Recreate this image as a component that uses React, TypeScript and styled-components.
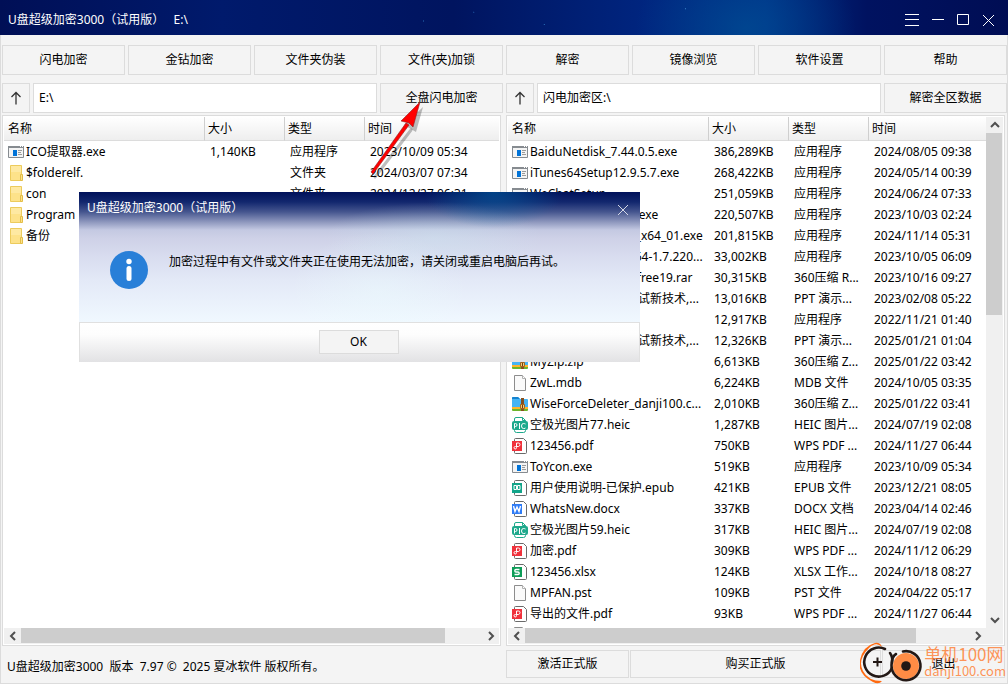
import React from "react";
import styled, { createGlobalStyle, css } from "styled-components";

const LINE = "#dcdcdc";

const GlobalStyle = createGlobalStyle`
  * { box-sizing: border-box; }
  body { margin: 0; background: #f4f4f4; }
  body, button, input, table {
    font-family: "Noto Sans", "Noto Sans CJK SC", sans-serif;
    font-size: 12px;
    line-height: 16px;
    color: #000;
  }
`;

/* ---------- window frame ---------- */

const Window = styled.div`
  position: relative;
  display: flex;
  flex-direction: column;
  height: 100vh;
  background: #f4f4f4;
  overflow: hidden;
`;

const TitleBar = styled.header`
  display: flex;
  align-items: center;
  justify-content: space-between;
  flex: none;
  height: 35px;
  padding: 4px 12px 0 8px;
  color: #fff;
  background:
    radial-gradient(circle at 11% 30%, #2456a8 0, transparent 1px),
    radial-gradient(circle at 42% 60%, #2a6fb8 0, transparent 1px),
    radial-gradient(circle at 47% 35%, #1f59a5 0, transparent 1px),
    radial-gradient(circle at 54% 70%, #2a6fb8 0, transparent 1px),
    radial-gradient(circle at 68% 25%, #3b86c8 0, transparent 1px),
    radial-gradient(ellipse 110px 80px at 74% 80%, rgba(0, 84, 150, 0.6), transparent),
    linear-gradient(90deg, #000f56 0%, #001a6c 22%, #00145f 45%, #00257f 64%, #003088 76%, #001260 86%, #000d54 100%);
`;

const TitleText = styled.h1`
  margin: 0;
  font-size: 12px;
  font-weight: 400;
  white-space: pre;
`;

const WindowControls = styled.div`
  display: flex;
  gap: 9px;
`;

const IconButton = styled.button`
  display: flex;
  align-items: center;
  justify-content: center;
  width: 16px;
  height: 16px;
  padding: 0;
  border: 0;
  background: none;
  color: #fff;
`;

const Body = styled.main`
  display: flex;
  flex: 1;
  flex-direction: column;
  min-height: 0;
  padding: 10px 0 5px 1px;
  border: 1px solid ${LINE};
  border-top: 0;
`;

/* ---------- controls ---------- */

const Button = styled.button`
  min-width: 0;
  padding: 0;
  border: 1px solid ${LINE};
  background: #f4f4f4;
  text-align: center;
  white-space: nowrap;
`;

const Toolbar = styled.nav`
  display: grid;
  grid-template-columns: repeat(8, minmax(0, 1fr));
  grid-auto-rows: 30px;
  gap: 3px;
`;

const Halves = styled.div<{ $fill?: boolean }>`
  display: grid;
  grid-template-columns: repeat(2, minmax(0, 1fr));
  gap: 3px;
  ${(p) => p.$fill && css`
    flex: 1;
    min-height: 0;
    margin-top: 2px;
  `}
`;

const PathRow = styled.div`
  display: grid;
  grid-template-columns: 28px minmax(0, 1fr) 123px;
  grid-auto-rows: 30px;
  gap: 3px;
  margin-top: 8px;
`;

const UpButton = styled(Button)`
  display: flex;
  align-items: center;
  justify-content: center;
`;

const PathInput = styled.input`
  min-width: 0;
  padding: 0 5px;
  border: 1px solid ${LINE};
  border-radius: 0;
  background: #fff;
`;

/* ---------- file list ---------- */

const Panel = styled.section`
  display: grid;
  grid-template-columns: minmax(0, 1fr) auto;
  grid-template-rows: minmax(0, 1fr) 16px;
  min-height: 0;
  margin-right: 2px;
  padding: 1px;
  border: 1px solid ${LINE};
  background: #fff;
`;

const ListArea = styled.div`
  min-height: 0;
  overflow: hidden;
`;

const FileTable = styled.table`
  width: 100%;
  table-layout: fixed;
  border-collapse: separate;
  border-spacing: 0;
`;

const Col = styled.col<{ $w?: number }>`
  ${(p) => p.$w && `width: ${p.$w}px;`}
`;

const HeadCell = styled.th`
  height: 24px;
  padding: 0 0 0 3px;
  border-right: 1px solid #cfcfcf;
  border-bottom: 1px solid ${LINE};
  background: linear-gradient(#fff, #eee);
  font-weight: 400;
  text-align: left;
  &:first-child { padding-left: 4px; }
  &:last-child { border-right: 0; }
`;

const Cell = styled.td`
  height: 21px;
  padding: 0 0 0 5px;
  overflow: hidden;
  white-space: nowrap;
`;

const NameCell = styled(Cell)`
  padding-left: 4px;
`;

const FileName = styled.span`
  display: flex;
  align-items: center;
  gap: 2px;
  svg { flex: none; }
`;

/* ---------- scroll bars ---------- */

const ScrollTrack = styled.div<{ $vertical?: boolean }>`
  display: flex;
  flex-direction: ${(p) => (p.$vertical ? "column" : "row")};
  min-width: 16px;
  background: #f0f0f0;
`;

const ScrollArrow = styled.button`
  display: flex;
  align-items: center;
  justify-content: center;
  flex: none;
  width: 17px;
  height: 16px;
  padding: 0;
  border: 0;
  background: none;
`;

const ScrollLane = styled.div<{ $vertical?: boolean }>`
  display: flex;
  flex: 1;
  flex-direction: ${(p) => (p.$vertical ? "column" : "row")};
  min-height: 0;
  padding: ${(p) => (p.$vertical ? "0 1px 0 0" : "0 0 1px")};
`;

const Thumb = styled.div<{ $size: number }>`
  flex: 0 0 ${(p) => p.$size}%;
  background: #cdcdcd;
`;

const Corner = styled.div`
  background: #f0f0f0;
`;

/* ---------- footer ---------- */

const FooterText = styled.p`
  margin: 0;
  padding: 9px 5px 0;
  white-space: pre;
`;

const FooterButtons = styled.div`
  display: grid;
  grid-template-columns: 123px minmax(0, 1fr) 123px;
  grid-auto-rows: 28px;
  gap: 1px;
  margin-right: 2px;
`;

const Footer = styled(Halves).attrs({ as: "footer" })`
  margin-top: 4px;
`;

/* ---------- message box ---------- */

const Dialog = styled.div`
  position: absolute;
  top: 192px;
  left: 79px;
  display: flex;
  flex-direction: column;
  width: 561px;
  background: #fff;
`;

const DialogTop = styled.div`
  height: 130px;
  background:
    radial-gradient(ellipse 70px 36px at 415px 0, rgba(0, 105, 170, 0.55), transparent),
    radial-gradient(ellipse 110px 36px at 355px 46px, rgba(205, 238, 245, 0.3), transparent),
    radial-gradient(ellipse 90px 60px at 300px 100px, rgba(235, 252, 253, 0.4), transparent),
    linear-gradient(#00115a 0, #12276e 10px, #46568f 20px, #8791b9 29px, #c4c9e2 38px, #ced1e7 46px, #d8dcef 64px, #e3e9f7 88px, #f0f8ff 130px);
`;

const DialogHeader = styled.div`
  display: flex;
  justify-content: space-between;
  padding: 8px 9px 0 8px;
  color: #fff;
`;

const DialogTitle = styled.h2`
  margin: 0;
  font-size: 12px;
  font-weight: 400;
`;

const CloseButton = styled(IconButton)`
  margin-top: 2px;
  color: #d5d8e6;
`;

const Message = styled.div`
  display: flex;
  gap: 20px;
  padding: 31px 30px 0;
  p { margin: 5px 0 0; }
`;

const DialogActions = styled.div`
  display: flex;
  justify-content: center;
  height: 40px;
  padding: 7px 2px 0 0;
  border: 1px solid #e0e0e0;
  border-bottom: 0;
  background: linear-gradient(#fff, #fdfdfd 30%, #e2e2e4);
`;

const OkButton = styled(Button)`
  width: 80px;
  height: 24px;
`;

/* ---------- overlays ---------- */

const Pointer = styled.svg`
  position: absolute;
  top: 96px;
  left: 364px;
  pointer-events: none;
`;

const Watermark = styled.div`
  position: absolute;
  right: 2px;
  bottom: 0;
  display: flex;
  gap: 1px;
  pointer-events: none;
`;

const WatermarkText = styled.div`
  padding-top: 2px;
  font-family: "Noto Sans CJK SC", sans-serif;
  color: rgba(255, 122, 45, 0.8);
  white-space: nowrap;
`;

const WatermarkName = styled.div`
  font-size: 17px;
  line-height: 20px;
`;

const WatermarkSite = styled.div`
  font-size: 13px;
  line-height: 14px;
`;

/* ---------- icons ---------- */

type Kind = "exe" | "folder" | "blank" | "zip" | "pic" | "pdf" | "epub" | "doc" | "xls";

const BADGE: Record<string, string> = { pdf: "#f0323c", epub: "#12a58a", doc: "#2f7cf6", xls: "#0e9d58" };

const FileIcon = ({ kind }: { kind: Kind }) => {
  const common = { width: 16, height: 18, viewBox: "0 0 16 18", "aria-hidden": true };
  if (kind === "exe")
    return (
      <svg {...common}>
        <path d="M.5 3.5h15v11H.5z" fill="#f4f4f4" stroke="#868b90" />
        <path d="M0 3h16v2H0z" fill="#868b90" />
        <path d="M12 3.500h1M14 3.500h1" stroke="#fff" />
        <path d="M5 7h4v6H5z" fill="#0073d8" />
        <path d="M10 7.500h4M10 9.500h3M10 11.500h4" stroke="#9a9a9a" />
      </svg>
    );
  if (kind === "folder")
    return (
      <svg {...common}>
        <path d="M2.500 1.500h11v15h-11z" fill="#fde28a" stroke="#eccb5c" />
        <path d="M3 2h10v6H3z" fill="#fee9a2" />
        <path d="M12.500 10.500h2v6h-2z" fill="#fde28a" stroke="#e3bd48" />
      </svg>
    );
  if (kind === "blank")
    return (
      <svg {...common}>
        <path d="M2.500 1.500h8l3 3v12h-11z" fill="#fafafa" stroke="#8d8d8d" />
        <path d="M10.500 1.500v3h3" fill="#fff" stroke="#b2b2b2" />
      </svg>
    );
  if (kind === "zip")
    return (
      <svg {...common}>
        <path d="M0 3q0-1 1-1h5l2 2h7q1 0 1 1v7H0z" fill="#45b4f5" />
        <path d="M0 3q0-1 1-1h5l2 2H0z" fill="#1583cf" />
        <path d="M0 12h16v2H0z" fill="#ffb52a" />
        <path d="M0 14h16v1q0 1-1 1H1q-1 0-1-1z" fill="#6cb52c" />
        <path d="M9 3h3v13H9z" fill="#87501f" />
        <path d="M8.500 9.500h4v4h-4z" fill="#f3cf7a" stroke="#a5631c" />
        <path d="M10 10h1v3h-1z" fill="#6e3d12" />
      </svg>
    );
  if (kind === "pic")
    return (
      <svg {...common}>
        <path d="M2.500 7V3q0-1.500 1.500-1.500h6.500l3 3V7" fill="#fff" stroke="#1ea98c" />
        <path d="M10.500 1.500v3h3" fill="none" stroke="#1ea98c" />
        <rect y="5" width="16" height="9" rx="2" fill="#1ea98c" />
        <path d="M2.500 12.500v-5h1q1.500 0 1.500 1.500t-1.500 1.500h-1M7.500 7v6M13.500 8q-1-.5-2-.5-2 0-2 2.500t2 2.500 2-.5" fill="none" stroke="#fff" />
        <path d="M2.500 14v.5q0 2 2 2h7q2 0 2-2V14" fill="#fff" stroke="#1ea98c" />
      </svg>
    );
  return (
    <svg {...common}>
      <path d="M2.500 2.500q0-1 1-1h8l3 3v11q0 1-1 1h-10q-1 0-1-1z" fill="#fff" stroke="#6a6a6a" />
      <path d="M0 4h10v10H0z" fill={BADGE[kind]} />
      {kind === "pdf" && (
        <path d="M4.500 9.500V6h2q1.500 0 1.500 1.500T6.500 9.500h-3q-1.500 0-1.500 1.200t1.200 1.300 1.300-1.300z" fill="none" stroke="#fff" />
      )}
      {kind === "epub" && <path d="M2 6.500h2.500v4H2zM5.500 6.500H8v4H5.500z" fill="none" stroke="#fff" />}
      {kind === "doc" && <path d="M1.500 6l1.500 5.500L5 7l2 4.500L8.500 6" fill="none" stroke="#fff" strokeWidth="1.400" />}
      {kind === "xls" && (
        <path d="M7.500 6.500H4q-1.200 0-1.200 1.200T4 9h2q1.200 0 1.200 1.200T6 11.500H2.500" fill="none" stroke="#fff" strokeWidth="1.400" />
      )}
    </svg>
  );
};

const ARROWS = { up: "M4 10l4-4 4 4", down: "M4 6l4 4 4-4", left: "M10 4L6 8l4 4", right: "M6 4l4 4-4 4" };

const Chevron = ({ dir }: { dir: keyof typeof ARROWS }) => (
  <svg width="16" height="16" viewBox="0 0 16 16" aria-hidden>
    <path d={ARROWS[dir]} fill="none" stroke="#505050" strokeWidth="2" />
  </svg>
);

const WindowIcon = ({ d }: { d: string }) => (
  <svg width="16" height="16" viewBox="0 0 16 16" aria-hidden>
    <path d={d} fill="none" stroke="currentColor" />
  </svg>
);

/* ---------- data ---------- */

type Row = [Kind, string, string, string, string];

const leftRows: Row[] = [
  ["exe", "ICO提取器.exe", "1,140KB", "应用程序", "2023/10/09 05:34"],
  ["folder", "$folderelf.", "", "文件夹", "2024/03/07 07:34"],
  ["folder", "con", "", "文件夹", "2024/12/27 06:31"],
  ["folder", "Program", "", "文件夹", "2024/12/27 06:31"],
  ["folder", "备份", "", "文件夹", "2024/12/27 06:31"],
];

const rightRows: Row[] = [
  ["exe", "BaiduNetdisk_7.44.0.5.exe", "386,289KB", "应用程序", "2024/08/05 09:38"],
  ["exe", "iTunes64Setup12.9.5.7.exe", "268,422KB", "应用程序", "2024/05/14 00:39"],
  ["exe", "WeChatSetup", "251,059KB", "应用程序", "2024/06/24 07:33"],
  ["exe", "QQSetup_9.7.15_ia.exe", "220,507KB", "应用程序", "2023/10/03 02:24"],
  ["exe", "QQ_9.9.16.2411.12_x64_01.exe", "201,815KB", "应用程序", "2024/11/14 05:31"],
  ["exe", "Setup_danji1000_x64-1.7.220...", "33,002KB", "应用程序", "2023/10/05 06:09"],
  ["zip", "Folder_Encryption_free19.rar", "30,315KB", "360压缩 R...", "2023/10/16 09:27"],
  ["blank", "计算机软件自动化测试新技术,...", "13,016KB", "PPT 演示...", "2023/02/08 05:22"],
  ["exe", "DiskSetup.exe", "12,917KB", "应用程序", "2022/11/21 01:40"],
  ["blank", "计算机软件自动化测试新技术,...", "12,326KB", "PPT 演示...", "2025/01/21 01:04"],
  ["zip", "MyZip.zip", "6,613KB", "360压缩 Z...", "2025/01/22 03:42"],
  ["blank", "ZwL.mdb", "6,224KB", "MDB 文件", "2024/10/05 03:35"],
  ["zip", "WiseForceDeleter_danji100.c...", "2,010KB", "360压缩 Z...", "2025/01/22 03:41"],
  ["pic", "空极光图片77.heic", "1,287KB", "HEIC 图片...", "2024/07/19 02:08"],
  ["pdf", "123456.pdf", "750KB", "WPS PDF ...", "2024/11/27 06:44"],
  ["exe", "ToYcon.exe", "519KB", "应用程序", "2023/10/09 05:34"],
  ["epub", "用户使用说明-已保护.epub", "421KB", "EPUB 文件", "2023/12/21 08:05"],
  ["doc", "WhatsNew.docx", "337KB", "DOCX 文档", "2023/04/14 02:46"],
  ["pic", "空极光图片59.heic", "317KB", "HEIC 图片...", "2024/07/19 02:08"],
  ["pdf", "加密.pdf", "309KB", "WPS PDF ...", "2024/11/12 06:29"],
  ["xls", "123456.xlsx", "124KB", "XLSX 工作...", "2024/10/18 08:27"],
  ["blank", "MPFAN.pst", "109KB", "PST 文件", "2024/04/22 05:17"],
  ["pdf", "导出的文件.pdf", "93KB", "WPS PDF ...", "2024/11/27 06:44"],
  ["blank", "", "", "", ""],
];

const TOOLS = ["闪电加密", "金钻加密", "文件夹伪装", "文件(夹)加锁", "解密", "镜像浏览", "软件设置", "帮助"];

/* ---------- composed parts ---------- */

const PathBar = ({ path, label, action }: { path: string; label: string; action: string }) => (
  <PathRow>
    <UpButton aria-label="上一级">
      <svg width="12" height="14" viewBox="0 0 12 14" aria-hidden>
        <path d="M6 13.500V1.500M1.500 6L6 1.500 10.500 6" fill="none" stroke="#333" strokeWidth="1.300" />
      </svg>
    </UpButton>
    <PathInput aria-label={label} defaultValue={path} />
    <Button>{action}</Button>
  </PathRow>
);

const FileList = ({ rows, thumb, vertical }: { rows: Row[]; thumb: number; vertical?: number }) => (
  <Panel>
    <ListArea>
      <FileTable>
        <colgroup>
          <Col $w={201} />
          <Col $w={80} />
          <Col $w={80} />
          <Col />
        </colgroup>
        <thead>
          <tr>
            {["名称", "大小", "类型", "时间"].map((h) => (
              <HeadCell key={h} scope="col">{h}</HeadCell>
            ))}
          </tr>
        </thead>
        <tbody>
          {rows.map(([kind, name, size, type, time], i) => (
            <tr key={i}>
              <NameCell>
                <FileName>
                  <FileIcon kind={kind} />
                  {name}
                </FileName>
              </NameCell>
              <Cell>{size}</Cell>
              <Cell>{type}</Cell>
              <Cell>{time}</Cell>
            </tr>
          ))}
        </tbody>
      </FileTable>
    </ListArea>
    {vertical ? (
      <ScrollTrack $vertical>
        <ScrollArrow aria-label="向上滚动"><Chevron dir="up" /></ScrollArrow>
        <ScrollLane $vertical><Thumb $size={vertical} /></ScrollLane>
        <ScrollArrow aria-label="向下滚动"><Chevron dir="down" /></ScrollArrow>
      </ScrollTrack>
    ) : (
      <span />
    )}
    <ScrollTrack>
      <ScrollArrow aria-label="向左滚动"><Chevron dir="left" /></ScrollArrow>
      <ScrollLane><Thumb $size={thumb} /></ScrollLane>
      <ScrollArrow aria-label="向右滚动"><Chevron dir="right" /></ScrollArrow>
    </ScrollTrack>
    <Corner />
  </Panel>
);

export default function App() {
  return (
    <Window>
      <GlobalStyle />
      <TitleBar>
        <TitleText>{"U盘超级加密3000（试用版）   E:\\"}</TitleText>
        <WindowControls>
          <IconButton aria-label="菜单"><WindowIcon d="M0 2.500h14M0 7.500h14M0 13.500h14" /></IconButton>
          <IconButton aria-label="最小化"><WindowIcon d="M2 7.500h12" /></IconButton>
          <IconButton aria-label="最大化"><WindowIcon d="M2.500 2.500h11v10h-11z" /></IconButton>
          <IconButton aria-label="关闭"><WindowIcon d="M3 3l11 11M14 3L3 14" /></IconButton>
        </WindowControls>
      </TitleBar>

      <Body>
        <Toolbar>
          {TOOLS.map((t) => (
            <Button key={t}>{t}</Button>
          ))}
        </Toolbar>

        <Halves>
          <PathBar path={"E:\\"} label="磁盘路径" action="全盘闪电加密" />
          <PathBar path={"闪电加密区:\\"} label="加密区路径" action="解密全区数据" />
        </Halves>

        <Halves $fill>
          <FileList rows={leftRows} thumb={92} />
          <FileList rows={rightRows} thumb={88} vertical={38} />
        </Halves>

        <Footer>
          <FooterText>{"U盘超级加密3000  版本  7.97 ©  2025 夏冰软件 版权所有。"}</FooterText>
          <FooterButtons>
            <Button>激活正式版</Button>
            <Button>购买正式版</Button>
            <Button>退出</Button>
          </FooterButtons>
        </Footer>
      </Body>

      <Pointer width="64" height="84" viewBox="0 0 64 84" aria-hidden>
        <path d="M11 81L47 34" stroke="rgba(0,0,0,.25)" strokeWidth="3" strokeLinecap="round" />
        <path d="M59 11L52 36 40 29z" fill="rgba(0,0,0,.25)" />
        <path d="M7 76L42 27l3 2L9 78z" fill="#f00" stroke="#8e2020" strokeWidth=".6" />
        <path d="M56 6L49 31l-4-4-8-2z" fill="#f00" stroke="#8e2020" strokeWidth=".6" />
      </Pointer>

      <Dialog role="dialog" aria-labelledby="message-title">
        <DialogTop>
          <DialogHeader>
            <DialogTitle id="message-title">U盘超级加密3000（试用版）</DialogTitle>
            <CloseButton aria-label="关闭"><WindowIcon d="M3 3l10 10M13 3L3 13" /></CloseButton>
          </DialogHeader>
          <Message>
            <svg width="40" height="40" viewBox="0 0 40 40" aria-hidden>
              <circle cx="20" cy="21" r="19" fill="#287fd8" />
              <circle cx="20" cy="12.500" r="2.700" fill="#fff" />
              <path d="M20 19.500v10" stroke="#fff" strokeWidth="5" strokeLinecap="round" />
            </svg>
            <p>加密过程中有文件或文件夹正在使用无法加密，请关闭或重启电脑后再试。</p>
          </Message>
        </DialogTop>
        <DialogActions>
          <OkButton>OK</OkButton>
        </DialogActions>
      </Dialog>

      <Watermark>
        <svg width="63" height="42" viewBox="0 0 63 42" aria-hidden>
          <path d="M22 5Q16-1 9 6-3 18 3 29q5 10 19 10-3 4-9 1Q-3 32 0 18 3 4 15 1q5-1 7 4z" fill="#ff6a10" />
          <path d="M25 7A14.500 14.500 0 1 0 32 26" fill="none" stroke="#231815" strokeWidth="2.600" strokeLinecap="round" />
          <path d="M30 11q3 4 2 10" fill="none" stroke="#231815" strokeWidth="2.600" strokeLinecap="round" />
          <path d="M17.500 15.500v9M13 20h9" stroke="#231815" strokeWidth="2" />
          <circle cx="46" cy="24" r="13" fill="#ff8c45" />
          <path d="M43 9.500A14.500 14.500 0 1 1 31.500 23Q32 14 36 12" fill="none" stroke="#231815" strokeWidth="2.600" strokeLinecap="round" />
          <circle cx="46" cy="24" r="4.800" fill="#231815" />
        </svg>
        <WatermarkText>
          <WatermarkName>单机100网</WatermarkName>
          <WatermarkSite>danji100.com</WatermarkSite>
        </WatermarkText>
      </Watermark>
    </Window>
  );
}
